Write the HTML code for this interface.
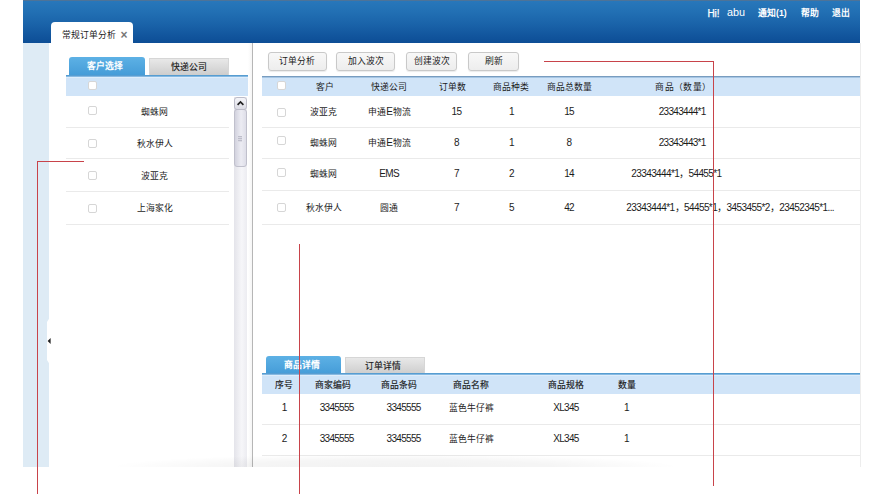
<!DOCTYPE html>
<html lang="zh-CN">
<head>
<meta charset="utf-8">
<title>常规订单分析</title>
<style>
*{box-sizing:border-box;margin:0;padding:0}
html,body{width:889px;height:494px;background:#fff;overflow:hidden}
body{position:relative;font-family:"Liberation Sans",sans-serif;font-size:8.8px;color:#1c1c1c;line-height:12px}
.a{position:absolute}
.t{position:absolute;white-space:nowrap;height:12px;line-height:12px;text-align:center;transform:translateX(-50%)}
.b{font-weight:bold}
.m{font-weight:500;color:#1a1a1a;-webkit-text-stroke:.15px #1a1a1a}
.n{font-size:10px;letter-spacing:-.7px}
.hdr{left:23px;top:0;width:837px;height:43px;background:linear-gradient(#2877ba 0%,#2270b4 25%,#1a63a9 55%,#11549c 85%,#0d4e96 100%);border-top:1px solid #4d7398}
.hdr .t{color:#fff;transform:none;text-align:left}
.side{left:23px;top:43px;width:26px;height:424px;background:#deebf5}
.main{left:49px;top:43px;width:811px;height:424px;background:#fff}
.ptab{left:51px;top:22px;width:82px;height:23px;background:#fff;border-radius:4px 4px 0 0}
.tabon{background:linear-gradient(#5db1e5,#449bd7);border-radius:3px 3px 0 0;color:#fff;font-weight:bold;text-align:center}
.taboff{background:linear-gradient(#e8e8e8,#cdcdcd);border:1px solid #d6d6d6;border-bottom:none;color:#1a1a1a;text-align:center;font-weight:500;-webkit-text-stroke:.15px #1a1a1a}
.bl{background:linear-gradient(#579dd1 0,#579dd1 1px,#86b9e2 1px,#86b9e2 2px);height:2px}
.th{background:linear-gradient(#deedfb 0,#deedfb 1px,#d0e4f8 1px)}
.cb{position:absolute;width:9px;height:9px;border:1px solid #d6d6d6;border-radius:2px;background:#fff}
.sep{position:absolute;height:1px;background:#eaeaea}
.btn{position:absolute;top:52px;height:19px;border:1px solid #c9c9c9;border-radius:3px;background:linear-gradient(#f8f8f8,#ededed);text-align:center;line-height:17px;color:#222;box-shadow:0 1px 1px rgba(0,0,0,.08)}
.red{position:absolute;background:#c8434a}
</style>
</head>
<body>
<!-- header -->
<div class="a hdr">
  <span class="t" style="left:684.6px;top:7px;font-size:10px;letter-spacing:-.2px;-webkit-text-stroke:.25px #fff">Hi!</span>
  <span class="t" style="left:704px;top:4.7px;font-size:10.8px">abu</span>
  <span class="t b" style="left:735px;top:6px">通知(1)</span>
  <span class="t b" style="left:778px;top:6px">帮助</span>
  <span class="t b" style="left:809px;top:6px">退出</span>
</div>
<div class="a side"></div>
<div class="a main"></div>
<div class="a ptab"></div>
<span class="t" style="left:89px;top:29px;color:#222">常规订单分析</span>
<span class="t b" style="left:124px;top:28.5px;color:#777;font-size:12px">×</span>

<!-- sidebar handle -->
<svg class="a" style="left:45px;top:318px" width="8" height="46" viewBox="0 0 8 46"><path d="M4.5 0 L4.5 46 L2 42 L2 4 Z" fill="#fff"/><path d="M2.6 23 L5.6 20 L5.6 26 Z" fill="#222"/></svg>

<!-- left panel -->
<div class="a tabon" style="left:69px;top:57px;width:76px;height:19px;line-height:18.5px;padding-right:5px">客户选择</div>
<div class="a taboff" style="left:149px;top:58px;width:80px;height:17px;line-height:17px">快递公司</div>
<div class="a bl" style="left:66px;top:75px;width:182px"></div>
<div class="a th" style="left:66px;top:77px;width:182px;height:19px"></div>
<div class="cb" style="left:88px;top:81px"></div>

<div class="cb" style="left:88px;top:106px"></div>
<div class="cb" style="left:88px;top:139px"></div>
<div class="cb" style="left:88px;top:170.5px"></div>
<div class="cb" style="left:88px;top:203.5px"></div>
<span class="t" style="left:154.6px;top:105.5px">蜘蛛网</span>
<span class="t" style="left:154.6px;top:138px">秋水伊人</span>
<span class="t" style="left:154.6px;top:169.5px">波亚克</span>
<span class="t" style="left:154.6px;top:202px">上海家化</span>
<div class="sep" style="left:66px;top:127px;width:163px"></div>
<div class="sep" style="left:66px;top:158px;width:163px"></div>
<div class="sep" style="left:66px;top:191px;width:163px"></div>
<div class="sep" style="left:66px;top:224px;width:163px"></div>

<!-- scrollbar -->
<div class="a" style="left:234px;top:97px;width:13px;height:370px;background:linear-gradient(90deg,#e4e4ea,#f6f6f9 60%,#ececf1)"></div>
<div class="a" style="left:234px;top:109px;width:13px;height:58px;border:1px solid #c0c0cc;border-radius:3px;background:linear-gradient(90deg,#d2d2de,#ececf3 55%,#dedee8)"></div>
<div class="a" style="left:234px;top:97px;width:13px;height:12.5px;border:1px solid #bcbcc8;border-radius:3px;background:linear-gradient(#f5f5f9,#dcdce5)"></div>
<svg class="a" style="left:234px;top:97px" width="13" height="13" viewBox="0 0 13 13"><path d="M3.6 7.8 L6.5 4.9 L9.4 7.8" fill="none" stroke="#222" stroke-width="1.7"/></svg>
<div class="a" style="left:238px;top:136px;width:4px;height:6px;background:repeating-linear-gradient(#bdbdca 0,#bdbdca 1px,#dadae3 1px,#dadae3 2px)"></div>

<!-- divider -->
<div class="a" style="left:248px;top:43px;width:4px;height:424px;background:linear-gradient(90deg,#fff,#f5f5f5)"></div>
<div class="a" style="left:252px;top:43px;width:1px;height:424px;background:#b6b6b6"></div>

<!-- right panel buttons -->
<div class="btn" style="left:268px;width:58.5px">订单分析</div>
<div class="btn" style="left:336px;width:59px">加入波次</div>
<div class="btn" style="left:406px;width:51px">创建波次</div>
<div class="btn" style="left:468px;width:51px">刷新</div>

<!-- order table -->
<div class="a" style="left:262px;top:76px;width:598px;height:2px;background:linear-gradient(#789cbf 0,#789cbf 1px,#a6c6e4 1px,#a6c6e4 2px)"></div>
<div class="a" style="left:262px;top:78px;width:598px;height:18px;background:#d0e4f8"></div>
<div class="cb" style="left:277px;top:81px"></div>
<span class="t" style="left:324.7px;top:80.5px">客户</span>
<span class="t" style="left:388.8px;top:80.5px">快递公司</span>
<span class="t" style="left:452.7px;top:80.5px">订单数</span>
<span class="t" style="left:510.7px;top:80.5px">商品种类</span>
<span class="t" style="left:569.9px;top:80.5px">商品总数量</span>
<span class="t" style="left:683.5px;top:80.5px;letter-spacing:.4px">商品（数量）</span>

<div class="cb" style="left:277px;top:108.3px"></div>
<div class="cb" style="left:277px;top:136.3px"></div>
<div class="cb" style="left:277px;top:167.5px"></div>
<div class="cb" style="left:277px;top:203.3px"></div>

<span class="t" style="left:323.8px;top:105.5px">波亚克</span>
<span class="t" style="left:389.5px;top:105.5px">申通<span style="font-size:10px">E</span>物流</span>
<span class="t n" style="left:456.4px;top:105.5px">15</span>
<span class="t n" style="left:511.4px;top:105.5px">1</span>
<span class="t n" style="left:569px;top:105.5px">15</span>
<span class="t n" style="left:682.2px;top:105.5px">23343444*1</span>

<span class="t" style="left:323.8px;top:137px">蜘蛛网</span>
<span class="t" style="left:389.5px;top:137px">申通<span style="font-size:10px">E</span>物流</span>
<span class="t n" style="left:456.4px;top:137px">8</span>
<span class="t n" style="left:511.4px;top:137px">1</span>
<span class="t n" style="left:569px;top:137px">8</span>
<span class="t n" style="left:682.2px;top:137px">23343443*1</span>

<span class="t" style="left:323.8px;top:168px">蜘蛛网</span>
<span class="t n" style="left:389.1px;top:168px">EMS</span>
<span class="t n" style="left:456.4px;top:168px">7</span>
<span class="t n" style="left:511.4px;top:168px">2</span>
<span class="t n" style="left:569px;top:168px">14</span>
<span class="t n" style="left:676.4px;top:168px;letter-spacing:-.62px">23343444*1，54455*1</span>

<span class="t" style="left:323.8px;top:202px">秋水伊人</span>
<span class="t" style="left:389.1px;top:202px">圆通</span>
<span class="t n" style="left:456.4px;top:202px">7</span>
<span class="t n" style="left:511.4px;top:202px">5</span>
<span class="t n" style="left:569px;top:202px">42</span>
<span class="t n" style="left:730.2px;top:202px;letter-spacing:-.575px">23343444*1，54455*1，3453455*2，23452345*1...</span>

<div class="sep" style="left:262px;top:127px;width:598px"></div>
<div class="sep" style="left:262px;top:158px;width:598px"></div>
<div class="sep" style="left:262px;top:190px;width:598px"></div>
<div class="sep" style="left:262px;top:224px;width:598px"></div>

<!-- detail tabs -->
<div class="a tabon" style="left:265.5px;top:355.5px;width:75.5px;height:19px;line-height:18px;padding-right:2px">商品详情</div>
<div class="a taboff" style="left:345px;top:357px;width:80px;height:17px;line-height:17px;padding-right:4px">订单详情</div>
<div class="a bl" style="left:262px;top:373px;width:598px"></div>
<div class="a th" style="left:262px;top:375px;width:598px;height:19px"></div>
<span class="t m" style="left:284px;top:378.5px">序号</span>
<span class="t m" style="left:333.4px;top:378.5px">商家编码</span>
<span class="t m" style="left:398.6px;top:378.5px">商品条码</span>
<span class="t m" style="left:471.1px;top:378.5px">商品名称</span>
<span class="t m" style="left:565.8px;top:378.5px">商品规格</span>
<span class="t m" style="left:626.5px;top:378.5px">数量</span>

<span class="t n" style="left:284.2px;top:401.5px">1</span>
<span class="t n" style="left:336.7px;top:401.5px">3345555</span>
<span class="t n" style="left:403.6px;top:401.5px">3345555</span>
<span class="t" style="left:471px;top:401.5px">蓝色牛仔裤</span>
<span class="t n" style="left:566px;top:401.5px">XL345</span>
<span class="t n" style="left:626.5px;top:401.5px">1</span>

<span class="t n" style="left:284.2px;top:432.7px">2</span>
<span class="t n" style="left:336.7px;top:432.7px">3345555</span>
<span class="t n" style="left:403.6px;top:432.7px">3345555</span>
<span class="t" style="left:471px;top:432.7px">蓝色牛仔裤</span>
<span class="t n" style="left:566px;top:432.7px">XL345</span>
<span class="t n" style="left:626.5px;top:432.7px">1</span>

<div class="sep" style="left:262px;top:424px;width:598px"></div>
<div class="sep" style="left:262px;top:455px;width:598px"></div>

<!-- bottom fade -->
<div class="a" style="left:110px;top:454px;width:570px;height:13px;background:radial-gradient(ellipse 50% 100% at 50% 100%,rgba(0,0,0,.05) 0%,rgba(0,0,0,.04) 55%,rgba(0,0,0,0) 100%)"></div>
<div class="a" style="left:860px;top:43px;width:1px;height:424px;background:#ededed"></div>

<!-- red annotation lines -->
<div class="red" style="left:37px;top:161px;width:47px;height:1px"></div>
<div class="red" style="left:37px;top:161px;width:1px;height:333px"></div>
<div class="red" style="left:299px;top:244px;width:1px;height:250px"></div>
<div class="red" style="left:544px;top:61px;width:170px;height:1px"></div>
<div class="red" style="left:713px;top:61px;width:1px;height:425px"></div>
</body>
</html>
